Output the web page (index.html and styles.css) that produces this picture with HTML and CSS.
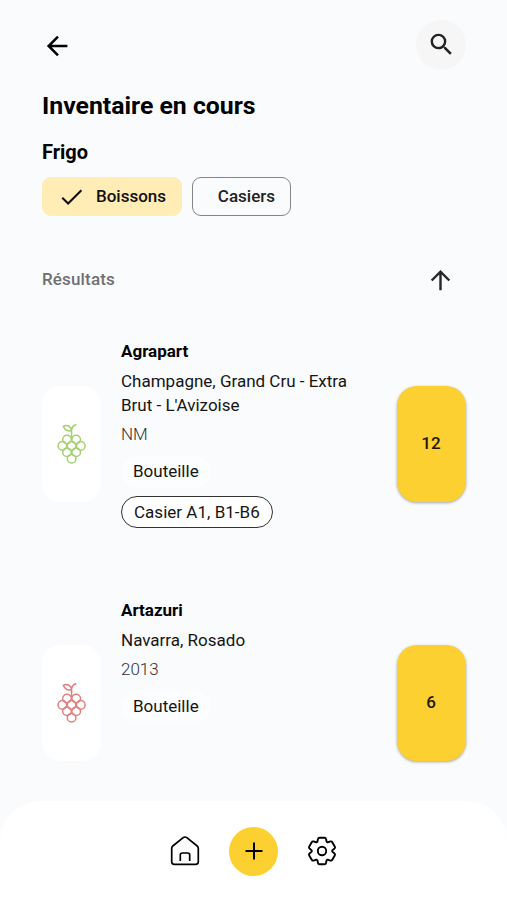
FILE: index.html
```html
<!DOCTYPE html>
<html lang="fr">
<head>
<meta charset="utf-8">
<title>Inventaire en cours</title>
<link rel="stylesheet" href="styles.css">
</head>
<body>
<svg class="defs" width="0" height="0" aria-hidden="true">
  <symbol id="grapes" viewBox="0 0 30 42">
    <g fill="none" stroke="currentColor" stroke-width="1.500" stroke-linecap="round">
      <path d="M14.600 14.500V6.500Q15.200 3 18.800 1.800M14.500 7.500C11 8.800 7.500 7 6.300 3.300C10 1.300 14 3 14.500 7.500Z"/>
      <circle cx="10" cy="16.500" r="4.300"/><circle cx="19.200" cy="16.500" r="4.300"/>
      <circle cx="5.400" cy="22.900" r="4.300"/><circle cx="14.600" cy="22.900" r="4.300"/><circle cx="23.800" cy="22.900" r="4.300"/>
      <circle cx="10" cy="29.300" r="4.300"/><circle cx="19.200" cy="29.300" r="4.300"/>
      <circle cx="14.600" cy="35.700" r="4.300"/>
    </g>
  </symbol>
</svg>
<div class="screen">
  <header class="topbar">
    <svg class="back" viewBox="0 0 24 24" width="30" height="30"><path d="M19.500 12H5M12 4.500L4.500 12l7.500 7.500" fill="none" stroke="currentColor" stroke-width="2"/></svg>
    <button class="search" aria-label="Rechercher"><svg viewBox="0 0 24 24" width="29" height="29"><path fill="currentColor" d="M15.500 14h-.79l-.28-.27A6.470 6.470 0 0 0 16 9.500 6.500 6.500 0 1 0 9.500 16c1.610 0 3.090-.59 4.230-1.570l.27.28v.79l5 4.990L20.490 19l-4.990-5zm-6 0C7.010 14 5 11.990 5 9.500S7.010 5 9.500 5 14 7.010 14 9.500 11.990 14 9.500 14z"/></svg></button>
  </header>
  <h1>Inventaire en cours</h1>
  <h2>Frigo</h2>
  <div class="filters">
    <button class="chip selected"><svg viewBox="0 0 24 24" width="26" height="26"><path d="M3 12.600l5.400 5.400L20.700 5.700" fill="none" stroke="currentColor" stroke-width="1.900"/></svg><span>Boissons</span></button>
    <button class="chip"><span>Casiers</span></button>
  </div>
  <div class="results">
    <span>Résultats</span>
    <svg viewBox="0 0 24 24" width="29" height="29"><path d="M12 20V5M4.700 12L12 4.700l7.300 7.300" fill="none" stroke="currentColor" stroke-width="2"/></svg>
  </div>
  <main class="list">
    <article class="item">
      <div class="kind white"><svg width="30" height="42"><use href="#grapes"/></svg></div>
      <div class="info">
        <h3>Agrapart</h3>
        <p class="desc">Champagne, Grand Cru - Extra Brut - L'Avizoise</p>
        <p class="year">NM</p>
        <span class="tag">Bouteille</span>
        <span class="tag outlined">Casier A1, B1-B6</span>
      </div>
      <button class="count">12</button>
    </article>
    <article class="item">
      <div class="kind rose"><svg width="30" height="42"><use href="#grapes"/></svg></div>
      <div class="info">
        <h3>Artazuri</h3>
        <p class="desc">Navarra, Rosado</p>
        <p class="year">2013</p>
        <span class="tag">Bouteille</span>
      </div>
      <button class="count">6</button>
    </article>
  </main>
</div>
<nav class="tabs">
  <svg viewBox="0 0 30 30" width="30" height="30"><path d="M1.700 12.500Q1.700 11 2.800 10L13.200 1.700Q15 .3 16.800 1.700L27.200 10Q28.300 11 28.300 12.500V25.700Q28.300 28.300 25.700 28.300H4.300Q1.700 28.300 1.700 25.700ZM10.300 25V19Q10.300 17 12.300 17H17.700Q19.700 17 19.700 19V25" fill="none" stroke="currentColor" stroke-width="1.700"/></svg>
  <button class="add" aria-label="Ajouter"><svg viewBox="0 0 20 20" width="20" height="20"><path d="M10 1.500V18.500M1.500 10H18.500" stroke="currentColor" stroke-width="2"/></svg></button>
  <svg viewBox="-15 -15 30 30" width="30" height="30"><g fill="none" stroke="currentColor" stroke-width="1.900" stroke-linejoin="round"><path d="M-4.600-9.200L-4-12.100Q-3.800-13.300-2.400-13.300H2.400Q3.800-13.300 4-12.100L4.600-9.200 5.670-8.580 8.400-9.550Q9.620-9.940 10.300-8.760L12.750-4.540Q13.420-3.360 12.500-2.500L10.270-.62V.62L12.500 2.500Q13.420 3.360 12.750 4.540L10.300 8.760Q9.620 9.940 8.400 9.550L5.670 8.580 4.600 9.200 4 12.100Q3.800 13.300 2.400 13.300H-2.400Q-3.800 13.300-4 12.100L-4.600 9.200-5.670 8.580-8.400 9.550Q-9.620 9.940-10.300 8.760L-12.750 4.540Q-13.420 3.360-12.500 2.500L-10.270.62V-.62L-12.500-2.500Q-13.420-3.360-12.750-4.540L-10.300-8.760Q-9.620-9.940-8.400-9.550L-5.670-8.580Z"/><circle r="4.200"/></g></svg>
</nav>
</body>
</html>
```
FILE: styles.css
```css
* { box-sizing: border-box; }
body {
  margin: 0;
  height: 900px;
  display: flex;
  flex-direction: column;
  overflow: hidden;
  background: #fafbfd;
  color: #000;
  font: 17px/24.500px Roboto, sans-serif;
}
button { border: 0; padding: 0; font: inherit; color: inherit; }
svg { display: block; flex: none; }
h1, h2, h3, p { margin: 0; }
.defs { position: absolute; }
.screen { flex: 1; min-height: 0; padding: 20px 41px 0 42px; }
.topbar { display: flex; justify-content: space-between; align-items: center; height: 50px; }
.back { margin: 2px 0 0 1px; }
.search {
  width: 50px; height: 50px; border-radius: 50%;
  display: grid; place-items: center;
  background: #f6f6f6; color: #222;
}
.search svg { margin-bottom: 1px; }
h1 { margin-top: 20px; font-size: 24.800px; line-height: 32px; font-weight: 700; }
h2 { margin-top: 18px; font-size: 20px; line-height: 24px; font-weight: 700; }
.filters { display: flex; gap: 10px; margin-top: 13px; }
.chip {
  display: flex; align-items: center; justify-content: flex-end; gap: 11px;
  height: 39px; width: 99px; padding: 0 15px;
  border: 1px solid #858588; border-radius: 9px;
  background: transparent; color: #222;
  font-weight: 500;
}
.chip.selected { width: 140px; border-color: #ffedb5; background: #ffedb5; color: #111; }
.results {
  display: flex; justify-content: space-between; align-items: center;
  height: 40px; margin-top: 44px; padding-right: 11px;
  font-weight: 500; color: #707070; letter-spacing: .15px;
}
.results span { padding-bottom: 2px; }
.results svg { color: #27272a; }
.list { display: flex; flex-direction: column; gap: 51px; margin-top: 40px; }
.item { display: flex; align-items: center; height: 208px; }
.kind {
  display: grid; place-items: center;
  width: 59px; height: 116px; border-radius: 18px;
  background: #fff;
}
.white { color: #a5d070; }
.rose { color: #df8080; }
.info { align-self: flex-start; flex: 1; display: flex; flex-direction: column; align-items: flex-start; margin-left: 20px; }
h3 { font-size: 17px; line-height: 22px; padding-bottom: 2px; font-weight: 700; }
.desc { width: 245px; margin-top: 5px; line-height: 24px; color: #151515; }
.year { margin-top: 5px; line-height: 25px; font-weight: 300; color: #333; }
.tag {
  height: 32px; padding: 0 12px; border-radius: 16px;
  margin-top: 8px; line-height: 30px;
  background: #fcfdfe; color: #151515;
}
.year + .tag { margin-top: 9px; }
.outlined { border: 1px solid #333; background: #fff; letter-spacing: .02px; }
.count {
  width: 69px; height: 116px; border-radius: 20px; padding: 0 1px 2px 0;
  background: #fdd032; color: #1d1905; font-weight: 500;
  box-shadow: 0 1px 3px rgba(0, 0, 0, .35);
}
.tabs {
  display: flex; justify-content: center; align-items: center; gap: 29px;
  height: 99px; padding-top: 1px;
  background: #fff; border-radius: 40px 40px 0 0;
}
.add {
  width: 49px; height: 49px; border-radius: 50%;
  display: grid; place-items: center; background: #fdd032;
}
```
